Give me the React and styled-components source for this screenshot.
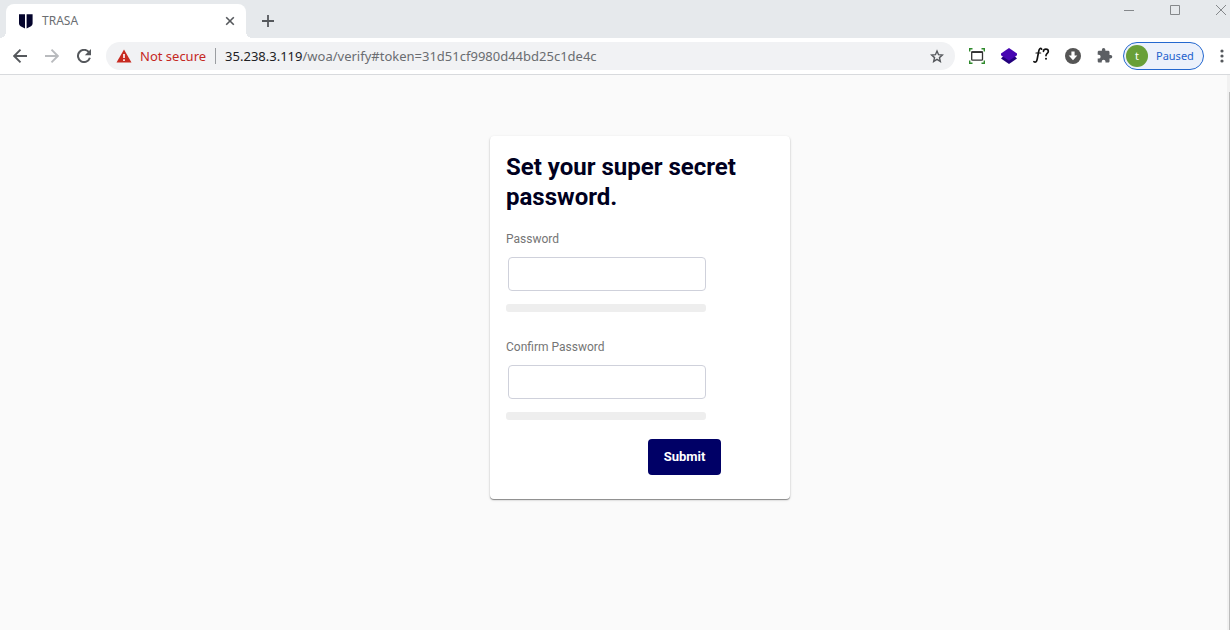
import React from "react";
import styled, { createGlobalStyle } from "styled-components";

const GlobalStyle = createGlobalStyle`
  * { box-sizing: border-box; }
  body {
    margin: 0;
    background: #fafafa;
    font-family: "Noto Sans", "Open Sans", sans-serif;
  }
  button, input { font-family: inherit; }
`;

const Browser = styled.div`
  min-height: 100vh;
  display: flex;
  flex-direction: column;
  overflow: hidden;
`;

const TabStrip = styled.header`
  display: flex;
  height: 38px;
  padding: 4px 0 0 6px;
  background: #e6e9ec;
`;

const Tab = styled.div`
  position: relative;
  display: flex;
  align-items: center;
  width: 240px;
  padding: 0 8px 0 12px;
  background: #fff;
  border-radius: 8px 8px 0 0;

  &::before,
  &::after {
    content: "";
    position: absolute;
    bottom: 0;
    width: 6px;
    height: 6px;
  }
  &::before {
    left: -6px;
    background: radial-gradient(circle at 0 0, transparent 6px, #fff 6px);
  }
  &::after {
    right: -6px;
    background: radial-gradient(circle at 100% 0, transparent 6px, #fff 6px);
  }
`;

const TabTitle = styled.span`
  flex: 1;
  padding-left: 8px;
  font-size: 12px;
  line-height: 16px;
  color: #6b6e72;
`;

const IconButton = styled.button`
  display: flex;
  align-items: center;
  justify-content: center;
  flex: none;
  width: ${(p) => p.$width || 32}px;
  height: ${(p) => p.$height || 28}px;
  padding: 0;
  border: 0;
  background: none;
  color: ${(p) => p.$color || "#55585c"};
  svg { display: block; }
`;

const NewTab = styled(IconButton)`
  align-self: center;
  margin-left: 6px;
`;

const WindowControls = styled.div`
  display: flex;
  gap: 28px;
  margin: -4px 0 0 auto;
`;

const Toolbar = styled.nav`
  display: flex;
  align-items: center;
  height: 37px;
  padding: 0 0 1px 4px;
  background: #fff;
  border-bottom: 1px solid #d8dadd;
`;

const AddressBar = styled.div`
  display: flex;
  align-items: center;
  flex: 1;
  min-width: 0;
  height: 28px;
  margin: 0 6px;
  padding: 0 2px 0 10px;
  border-radius: 14px;
  background: #f1f2f4;
`;

const NotSecure = styled.span`
  margin-left: 8px;
  padding-right: 9px;
  border-right: 1px solid #9a9da1;
  font-size: 13px;
  line-height: 16px;
  color: #c5281f;
  white-space: nowrap;
`;

const Url = styled.a`
  flex: 1;
  min-width: 0;
  padding-left: 9px;
  overflow: hidden;
  font-size: 13px;
  line-height: 20px;
  color: #6a6d71;
  text-decoration: none;
  white-space: nowrap;
`;

const Host = styled.span`
  color: #202124;
`;

const Profile = styled.button`
  display: flex;
  align-items: center;
  gap: 8px;
  width: 81px;
  height: 28px;
  margin: 0 10px 0 2px;
  padding: 0 0 0 2px;
  border: 1px solid #2468cf;
  border-radius: 14px;
  background: #ecf1fb;
  color: #1e62cd;
  font-size: 11px;
`;

const Avatar = styled.span`
  display: flex;
  align-items: center;
  justify-content: center;
  width: 22px;
  height: 22px;
  border-radius: 50%;
  background: #689f38;
  color: #fff;
`;

const Viewport = styled.div`
  display: flex;
  flex: 1;
`;

const Page = styled.main`
  flex: 1;
  padding: 61px 0 24px 53px;
`;

const ScrollTrack = styled.div`
  width: 3px;
  padding: 17px 0 0 2px;
  background: #f1f1f1;
`;

const ScrollThumb = styled.div`
  height: 100%;
  background: #bcbcbc;
`;

const Card = styled.form`
  width: 300px;
  margin: 0 auto;
  padding: 16px 16px 24px;
  border-radius: 4px;
  background: #fff;
  box-shadow: 0 1px 1px rgba(0, 0, 0, 0.4), 0 1px 3px rgba(0, 0, 0, 0.14);
  font-family: Roboto, sans-serif;
`;

const Title = styled.h1`
  margin: 0 0 16px;
  font-size: 24px;
  font-weight: 700;
  line-height: 30px;
  color: #000020;
`;

const Field = styled.div`
  width: 200px;
  margin-bottom: ${(p) => (p.$last ? 19 : 24)}px;
`;

const Label = styled.label`
  display: block;
  font-size: 12px;
  line-height: 22px;
  color: #757575;
`;

const Input = styled.input`
  display: block;
  width: 198px;
  height: 34px;
  margin: 7px 0 13px 2px;
  padding: 0 10px;
  border: 1px solid #cfd1db;
  border-radius: 4px;
  background: #fff;
  font-size: 14px;
`;

const Strength = styled.div`
  height: 8px;
  border-radius: 3px;
  background: #eee;
`;

const Submit = styled.button`
  display: block;
  width: 73px;
  height: 36px;
  margin-left: 142px;
  padding: 0 0 2px;
  border: 0;
  border-radius: 4px;
  background: #000066;
  color: #fff;
  font-size: 13px;
  font-weight: 700;
`;

const stroke = { fill: "none", stroke: "currentColor" };

const Shield = () => (
  <svg width="16" height="16" viewBox="0 0 16 16" fill="#04042c">
    <path d="M1 1.300h6v14.200L2.600 13.200Q1 12.300 1 10.500zM8.600 1.300h6v9.200q0 1.800-1.600 2.700l-4.400 2.300z" />
  </svg>
);

const extensions = [
  {
    name: "Capture",
    icon: (
      <svg width="16" height="16" viewBox="0 0 16 16" fill="none">
        <path d="M.7 3.500V.8h2.800M12.500.8h2.800v2.700M15.300 12.500v2.700h-2.800M3.500 15.200H.7v-2.700" stroke="#2f8a2c" strokeWidth="1.400" />
        <rect x="2.700" y="3.800" width="10.800" height="8.400" rx=".8" stroke="#333" strokeWidth="1.300" />
        <path d="M2.500 4.100h11.200" stroke="#333" strokeWidth="1.800" />
      </svg>
    ),
  },
  {
    name: "Layers",
    icon: (
      <svg width="16" height="16" viewBox="0 0 16 16">
        <path d="M0 10.500 2.500 8h11l2.500 2.500L8 16z" fill="#22007c" />
        <path d="m8 0 8 5.500v1.800L8 12.700 0 7.300V5.500z" fill="#4706b2" />
      </svg>
    ),
  },
  {
    name: "Font finder",
    icon: (
      <svg width="17" height="17" viewBox="0 0 17 17" fill="none" stroke="#111" strokeLinecap="round">
        <path d="M8.700 2.200C7.500.7 6.200 1.600 5.700 4.300L4.200 12.200C3.700 14.900 2.400 15.900.9 14.700" strokeWidth="1.700" />
        <path d="M3 6h4.700" strokeWidth="1.200" />
        <path d="M10.500 4.300c.2-2.800 4.800-2.800 4.800.1 0 2-2.300 2-2.300 4.200" strokeWidth="1.700" />
        <path d="M13 11.700v.1" strokeWidth="2" />
      </svg>
    ),
  },
  {
    name: "Downloads",
    icon: (
      <svg width="16" height="16" viewBox="0 0 16 16">
        <circle cx="8" cy="8" r="8" fill="#555" />
        <path d="M6.400 3.500h3.200v4h2.700L8 12.200 3.700 7.500h2.700z" fill="#fff" />
      </svg>
    ),
  },
  {
    name: "Extensions",
    icon: (
      <svg width="16" height="16" viewBox="1 1 23 23" fill="#5b5e63">
        <path d="M20.500 11H19V7c0-1.100-.9-2-2-2h-4V3.500a2.500 2.500 0 0 0-5 0V5H4c-1.100 0-2 .9-2 2v3.800h1.500a2.700 2.700 0 0 1 0 5.400H2V20c0 1.100.9 2 2 2h3.800v-1.500a2.700 2.700 0 0 1 5.400 0V22H17c1.100 0 2-.9 2-2v-4h1.500a2.500 2.500 0 0 0 0-5z" />
      </svg>
    ),
  },
];

function PasswordField({ id, label, last }) {
  return (
    <Field $last={last}>
      <Label htmlFor={id}>{label}</Label>
      <Input id={id} type="password" />
      <Strength />
    </Field>
  );
}

export default function App() {
  return (
    <Browser>
      <GlobalStyle />
      <TabStrip>
        <Tab>
          <Shield />
          <TabTitle>TRASA</TabTitle>
          <IconButton $width={16} $height={16} aria-label="Close tab">
            <svg width="10" height="10" viewBox="0 0 10 10" {...stroke} strokeWidth="1.600">
              <path d="m1.200 1.200 7.600 7.600m0-7.600L1.200 8.800" />
            </svg>
          </IconButton>
        </Tab>
        <NewTab aria-label="New tab">
          <svg width="12" height="12" viewBox="0 0 12 12" {...stroke} strokeWidth="1.800">
            <path d="M6 0v12M0 6h12" />
          </svg>
        </NewTab>
        <WindowControls>
          <IconButton $width={18} $height={20} $color="#85888b" aria-label="Minimize">
            <svg width="10" height="11" viewBox="0 0 10 11" {...stroke}><path d="M0 5.500h10" /></svg>
          </IconButton>
          <IconButton $width={18} $height={20} $color="#85888b" aria-label="Maximize">
            <svg width="10" height="10" viewBox="0 0 10 10" {...stroke}><path d="M.5.5h9v9h-9z" /></svg>
          </IconButton>
          <IconButton $width={18} $height={20} $color="#85888b" aria-label="Close window">
            <svg width="10" height="10" viewBox="0 0 10 10" {...stroke}><path d="m0 0 10 10M10 0 0 10" /></svg>
          </IconButton>
        </WindowControls>
      </TabStrip>

      <Toolbar>
        <IconButton aria-label="Back">
          <svg width="14" height="14" viewBox="0 0 14 14" {...stroke} strokeWidth="1.900"><path d="M14 7H1.500M7.500.7 1.200 7l6.300 6.300" /></svg>
        </IconButton>
        <IconButton $color="#b9bbbe" aria-label="Forward">
          <svg width="14" height="14" viewBox="0 0 14 14" {...stroke} strokeWidth="1.900"><path d="M0 7h12.500M6.500.7 12.800 7l-6.300 6.300" /></svg>
        </IconButton>
        <IconButton aria-label="Reload">
          <svg width="14" height="14" viewBox="0 0 14 14">
            <path d="M11.900 3.200A6.100 6.100 0 1 0 12.900 8.800" fill="none" stroke="currentColor" strokeWidth="2" />
            <path d="M14 0v6.200H7.800z" fill="currentColor" />
          </svg>
        </IconButton>
        <AddressBar>
          <svg width="16" height="14" viewBox="0 0 16 14">
            <path d="M8 .5 15.500 13.500H.5z" fill="#c82a20" />
            <path d="M8 5v4m0 1.200v1.700" stroke="#fff" strokeWidth="1.600" />
          </svg>
          <NotSecure>Not secure</NotSecure>
          <Url href="#token=31d51cf9980d44bd25c1de4c">
            <Host>35.238.3.119</Host>/woa/verify#token=31d51cf9980d44bd25c1de4c
          </Url>
          <IconButton aria-label="Bookmark this page">
            <svg width="14" height="14" viewBox="0 0 20 19" {...stroke} strokeWidth="2">
              <path d="m10 2.400 2.200 5.200 5.600.5-4.300 3.700 1.300 5.500-4.800-2.900-4.800 2.900 1.300-5.500L2.200 8.100l5.600-.5z" />
            </svg>
          </IconButton>
        </AddressBar>
        {extensions.map((e) => (
          <IconButton key={e.name} aria-label={e.name}>{e.icon}</IconButton>
        ))}
        <Profile>
          <Avatar>t</Avatar>
          Paused
        </Profile>
        <IconButton $width={16} aria-label="Menu">
          <svg width="4" height="14" viewBox="0 0 4 14" fill="currentColor">
            <circle cx="2" cy="2" r="1.600" />
            <circle cx="2" cy="7" r="1.600" />
            <circle cx="2" cy="12" r="1.600" />
          </svg>
        </IconButton>
      </Toolbar>

      <Viewport>
        <Page>
          <Card onSubmit={(e) => e.preventDefault()}>
            <Title>Set your super secret password.</Title>
            <PasswordField id="password" label="Password" />
            <PasswordField id="confirm-password" label="Confirm Password" last />
            <Submit type="submit">Submit</Submit>
          </Card>
        </Page>
        <ScrollTrack>
          <ScrollThumb />
        </ScrollTrack>
      </Viewport>
    </Browser>
  );
}
